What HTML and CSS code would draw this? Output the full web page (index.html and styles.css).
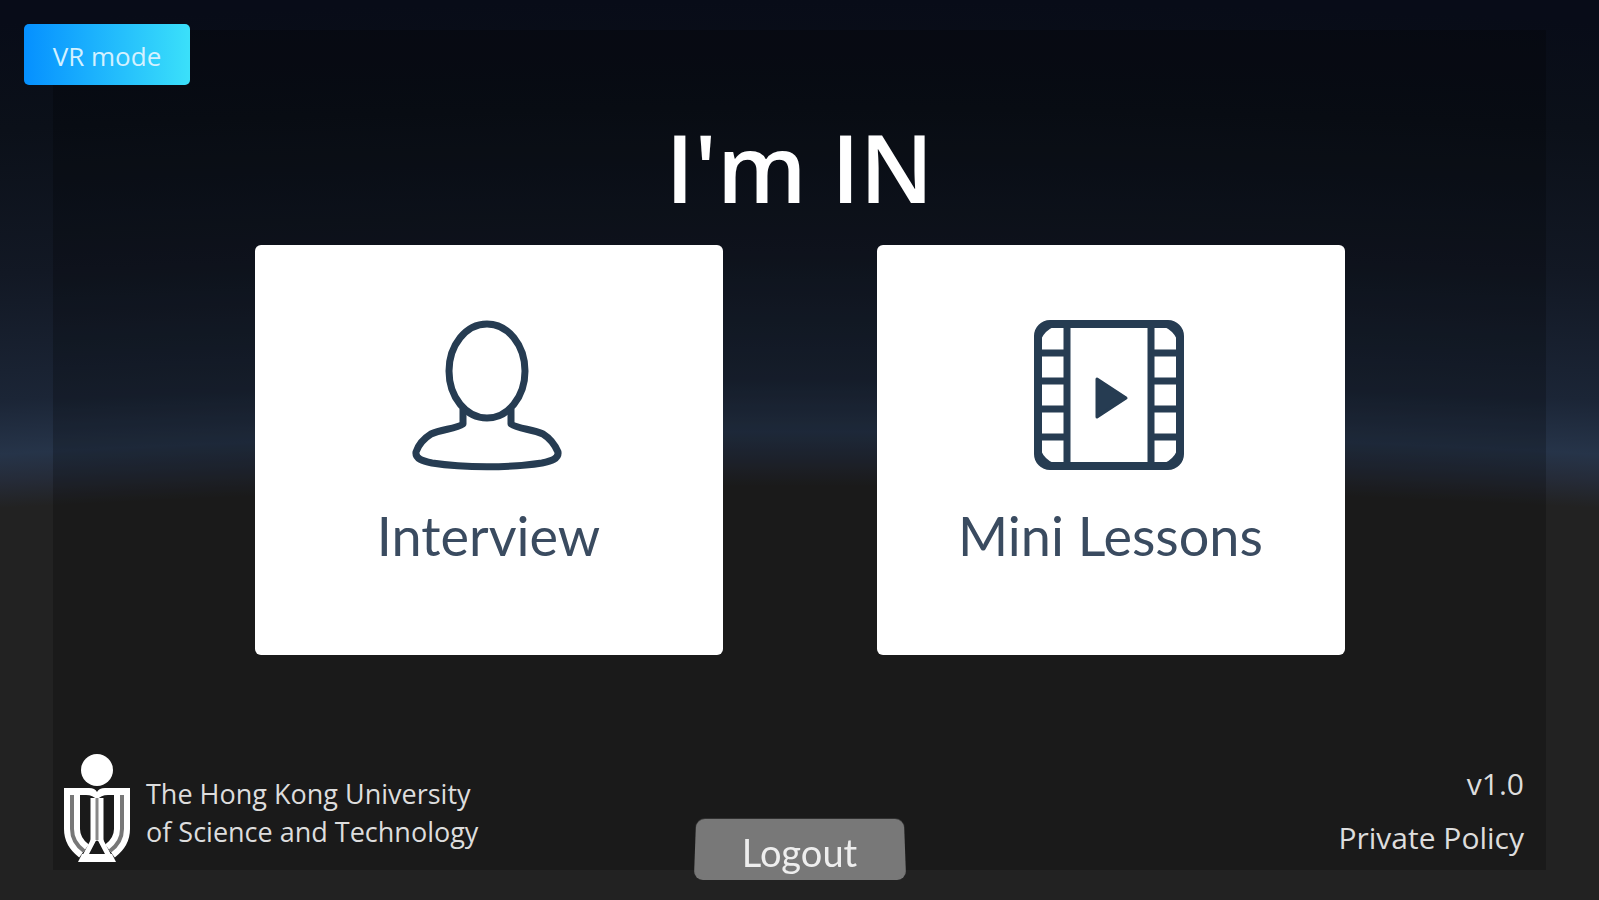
FILE: index.html
```
<!DOCTYPE html>
<html lang="en">
<head>
    <meta charset="UTF-8">
    <meta name="viewport" content="width=device-width, initial-scale=1.0">
    <title>I'm IN</title>
    <link rel="stylesheet" href="styles.css">
</head>
<body>
    <button class="vr-button" type="button">VR mode</button>

    <div class="panel">
        <h1>I'm IN</h1>

        <main class="cards">
            <button class="card" type="button">
                <svg class="card-icon" viewBox="0 0 150 150" fill="none" stroke="#263c52" stroke-width="7" stroke-linejoin="round" aria-hidden="true">
                    <ellipse cx="73" cy="51" rx="38" ry="47"/>
                    <path d="M49 89v15C42 109 28 109 17 114C9 119 4 126 2 132C1 139 9 141 18 143C50 148 96 148 128 143C137 141 145 139 144 132C141 125 137 119 129 114C118 109 104 109 97 104V89"/>
                </svg>
                <span>Interview</span>
            </button>

            <button class="card" type="button">
                <svg class="card-icon" viewBox="0 0 150 150" fill="none" stroke="#263c52" stroke-width="7" aria-hidden="true">
                    <rect x="2" y="4" width="142" height="142" rx="12" stroke-width="8"/>
                    <path d="M31 4v142M115 4v142M2 33h29M2 61h29M2 89h29M2 117h29M115 33h29M115 61h29M115 89h29M115 117h29"/>
                    <path d="M4 19V6h13q-9 4-13 13zM142 19V6h-13q9 4 13 13zM4 131v13h13q-9-4-13-13zM142 131v13h-13q9-4 13-13z" fill="#263c52" stroke-width="2"/>
                    <path d="M61 59v38l29-19z" fill="#263c52" stroke-width="3" stroke-linejoin="round"/>
                </svg>
                <span>Mini Lessons</span>
            </button>
        </main>

        <footer>
            <div class="school">
                <svg class="school-logo" viewBox="0 0 66 108" aria-hidden="true">
                    <circle cx="33" cy="16" r="16" fill="#fff"/>
                    <path d="M0 34h25q6 0 8 4q2-4 8-4h25v7H44q-7 0-11 5q-4-5-11-5H0z" fill="#fff"/>
                    <g fill="none">
                        <path d="M8 40v35q0 13 12 22M58 40v35q0 13-12 22" stroke="#fff" stroke-width="16"/>
                        <path d="M8 41v34q0 13 12 22M58 41v34q0 13-12 22" stroke="#777" stroke-width="4"/>
                        <path d="M33 44v43" stroke="#fff" stroke-width="13"/>
                        <path d="M30 85l-11 21M36 85l11 21" stroke="#fff" stroke-width="5"/>
                        <path d="M33 44v42" stroke="#888" stroke-width="3"/>
                    </g>
                    <path d="M33 86l7 14H26z" fill="#1b1b1b"/>
                    <path d="M18 100h30l4 8H14z" fill="#fff"/>
                </svg>
                <p>The Hong Kong University<br>of Science and Technology</p>
            </div>

            <button class="logout" type="button">Logout</button>

            <div class="info">
                <span>v1.0</span>
                <a href="#">Private Policy</a>
            </div>
        </footer>
    </div>
</body>
</html>
```
FILE: styles.css
```
* {
    box-sizing: border-box;
}
body {
    font-family: 'Open Sans', sans-serif;
    display: flex;
    min-height: 100vh;
    margin: 0;
    padding: 30px 53px;
    color: #fff;
    /* night sky over a dark floor, with a slightly curved horizon */
    background: radial-gradient(circle at 50% 1650vh,
        #222 1596vh,
        #252b38 1599vh,
        #263449 1602vh,
        #1b2536 1608vh,
        #121824 1622vh,
        #0b1019 1638vh,
        #080c18 1650vh);
}
button {
    font-family: inherit;
    border: none;
    cursor: pointer;
}
.vr-button {
    position: absolute;
    top: 24px;
    left: 24px;
    width: 166px;
    height: 61px;
    padding-top: 4px;
    font-size: 26px;
    color: #d4f1ff;
    background: linear-gradient(to right, #0590ff, #3be0fa);
    border-radius: 5px;
}
.panel {
    flex: 1;
    display: flex;
    flex-direction: column;
    background-color: rgba(0, 0, 0, 0.22);
}
h1 {
    margin: 82px 0 0;
    font-size: 94px;
    line-height: 110px;
    font-weight: 600;
    text-align: center;
}
.cards {
    display: flex;
    justify-content: center;
    gap: 154px;
    margin-top: 23px;
}
.card {
    display: flex;
    flex-direction: column;
    align-items: center;
    width: 468px;
    height: 410px;
    padding: 75px 20px 0;
    font-family: Lato, sans-serif;
    font-size: 54px;
    line-height: 64px;
    color: #3a4b60;
    background-color: #fff;
    border-radius: 6px;
}
.card-icon {
    width: 150px;
    height: 150px;
    margin-bottom: 34px;
    overflow: visible;
}
footer {
    display: grid;
    grid-template-columns: 1fr auto 1fr;
    align-items: end;
    margin-top: auto;
    color: #ddd;
}
.school {
    display: flex;
    align-items: center;
    gap: 16px;
    padding: 0 0 8px 11px;
    font-size: 27px;
    line-height: 38px;
}
.school p {
    margin: 10px 0 0;
}
.school-logo {
    width: 66px;
    height: 108px;
}
.logout {
    position: relative;
    isolation: isolate;
    width: 214px;
    height: 62px;
    margin-bottom: -10px;
    padding-top: 6px;
    font-family: Lato, sans-serif;
    font-size: 38px;
    color: #eee;
    background: none;
}
/* tilted plate behind the label */
.logout::before {
    content: "";
    position: absolute;
    inset: 0 2px;
    z-index: -1;
    background-color: #787878;
    border-radius: 9px;
    transform: perspective(400px) rotateX(8deg);
}
.info {
    display: flex;
    flex-direction: column;
    align-items: flex-end;
    gap: 18px;
    padding: 0 22px 14px 0;
    font-size: 30px;
    line-height: 36px;
}
.info a {
    color: inherit;
    text-decoration: none;
}
```
